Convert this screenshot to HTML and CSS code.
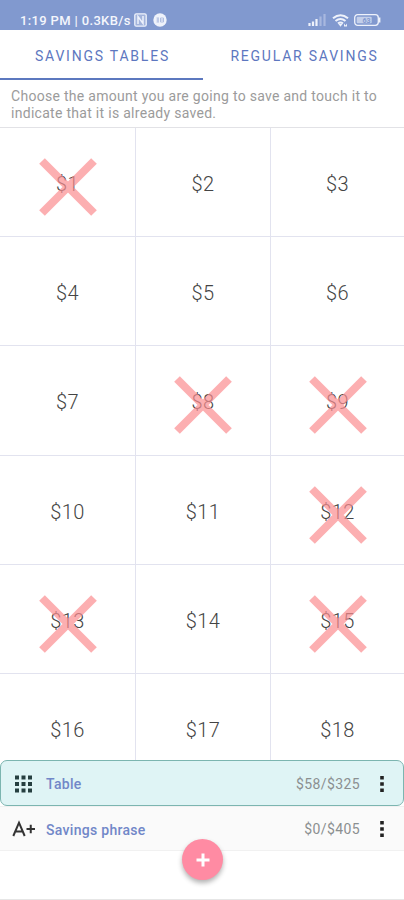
FILE: index.html
```html
<!DOCTYPE html>
<html lang="en">
<head>
  <meta charset="UTF-8">
  <meta name="viewport" content="width=device-width, initial-scale=1.0">
  <title>Savings tables</title>
  <link rel="stylesheet" href="styles.css">
</head>
<body>
  <div class="status-bar">
    <span class="status-text">1:19 PM | 0.3KB/s</span>
    <svg class="nfc-icon" width="13" height="14" viewBox="0 0 13 14">
      <rect x="0.8" y="0.8" width="11.4" height="12.4" rx="1.5" fill="#a3b4dc" stroke="#eef2fb" stroke-width="1.3"/>
      <path d="M4 11V3.5L9 10.5V3" fill="none" stroke="#eef2fb" stroke-width="1.5"/>
    </svg>
    <svg class="app-icon" width="14" height="14" viewBox="0 0 14 14">
      <circle cx="7" cy="7" r="6.7" fill="#eef2fb"/>
      <path d="M3.5 5H6M3.5 7H6M3.5 9H6M5 5V9M7.5 5H10.5V9H7.5ZM7.5 7H10.5" fill="none" stroke="#a3b4dc" stroke-width="0.8"/>
    </svg>
    <div class="status-right">
      <svg width="19" height="12" viewBox="0 0 19 12">
        <path d="M1.5 9V12M5 7.5V12M8.5 5V12" stroke="#eef2fb" stroke-width="2.2"/>
        <path d="M12.5 2.5V12M16.5 0V12" stroke="#a8b8df" stroke-width="2.2"/>
      </svg>
      <svg width="17" height="13" viewBox="0 0 17 13">
        <path d="M1 4.3Q8.5 -1.8 16 4.3M3.5 7Q8.5 3 13.5 7M6 9.5Q8.5 7.5 11 9.5" fill="none" stroke="#eef2fb" stroke-width="2.1"/>
        <path d="M6.5 10L8.5 12.7L10.5 10ZM12 12.5V9.5L13.5 11.5L15 9.5V12.5Z" fill="#eef2fb"/>
      </svg>
      <svg width="27" height="12" viewBox="0 0 27 12">
        <rect x="0.7" y="0.7" width="23.6" height="10.6" rx="3" fill="none" stroke="#eef2fb" stroke-width="1.3"/>
        <rect x="2.7" y="2.7" width="15" height="6.6" rx="1" fill="#c3cfea"/>
        <path d="M25.5 3.5V8.5" stroke="#eef2fb" stroke-width="1.8"/>
        <text x="12.5" y="8.6" text-anchor="middle" class="battery-level">63</text>
      </svg>
    </div>
  </div>

  <div class="tabs">
    <div class="tab active">SAVINGS TABLES</div>
    <div class="tab">REGULAR SAVINGS</div>
  </div>

  <p class="hint">Choose the amount you are going to save and touch it to indicate that it is already saved.</p>

  <div class="amounts" id="amounts"></div>

  <div class="saving-list">
    <div class="saving selected">
      <svg class="saving-icon" width="24" height="18" viewBox="0 0 24 18">
        <path d="M3 2.500H20M3 9H20M3 15.500H20" stroke="#263f40" stroke-width="4" stroke-dasharray="4 2.500"/>
      </svg>
      <span class="saving-name">Table</span>
      <span class="saving-total">$58/$325</span>
      <svg class="more" width="4" height="18" viewBox="0 0 4 18"><path d="M0.200 1H3.800V4.600H0.200ZM0.200 7.200H3.800V10.800H0.200ZM0.200 13.400H3.800V17H0.200Z" fill="#222"/></svg>
    </div>
    <div class="saving">
      <svg class="saving-icon" width="24" height="18" viewBox="0 0 24 18">
        <path d="M1.3 16L7 2.7L12.7 16M3.3 11.5H10.7M14.500 9H23M18.750 4.800V13.200" fill="none" stroke="#333" stroke-width="2"/>
      </svg>
      <span class="saving-name phrase">Savings phrase</span>
      <span class="saving-total">$0/$405</span>
      <svg class="more" width="4" height="18" viewBox="0 0 4 18"><path d="M0.200 1H3.800V4.600H0.200ZM0.200 7.200H3.800V10.800H0.200ZM0.200 13.400H3.800V17H0.200Z" fill="#222"/></svg>
    </div>
  </div>

  <button class="add-button" aria-label="Add">
    <svg width="14" height="14" viewBox="0 0 14 14"><path d="M7 0.500V13.500M0.500 7H13.500" stroke="#fff" stroke-width="3"/></svg>
  </button>

  <script>
    // amounts that are already saved
    const saved = [1, 8, 9, 12, 13, 15];
    const amounts = document.getElementById('amounts');

    for (let i = 1; i <= 18; i++) {
      const cell = document.createElement('div');
      cell.classList.add('amount');
      cell.innerHTML = `<span>$${i}</span>`;
      if (saved.includes(i)) {
        cell.innerHTML += `
          <svg class="cross" width="58" height="58" viewBox="0 0 58 58">
            <path d="M3 3L55 55M55 3L3 55" stroke="#fb8d90" stroke-opacity="0.7" stroke-width="8"/>
          </svg>`;
      }
      amounts.appendChild(cell);
    }
  </script>
</body>
</html>
```
FILE: styles.css
```css
* {
  box-sizing: border-box;
}
body {
  margin: 0;
  height: 900px;
  display: flex;
  flex-direction: column;
  overflow: hidden;
  position: relative;
  background: #fff;
  border-bottom: 1px solid #e6e6e6;
  font-family: Roboto, "Liberation Sans", sans-serif;
}

/* status bar */
.status-bar {
  flex: none;
  height: 30px;
  padding: 10px 23px 0 20px;
  display: flex;
  align-items: center;
  background: #8199cf;
  color: #f4f6fc;
}
.status-text {
  font-size: 13px;
  font-weight: 500;
  letter-spacing: 0.35px;
  white-space: nowrap;
}
.nfc-icon {
  margin-left: 3px;
}
.app-icon {
  margin-left: 6px;
}
.status-right {
  margin-left: auto;
  display: flex;
  align-items: center;
  gap: 5px;
}
.battery-level {
  font-size: 7px;
  font-weight: 700;
  fill: #8199cf;
}

/* tabs */
.tabs {
  flex: none;
  height: 50px;
  display: grid;
  grid-template-columns: 203px 1fr;
}
.tab {
  padding: 4px 0 0 2px;
  display: flex;
  align-items: center;
  justify-content: center;
  border-bottom: 2px solid transparent;
  font-size: 14px;
  letter-spacing: 1.78px;
  color: #5d77c0;
  white-space: nowrap;
}
.tab.active {
  border-color: #5c78bf;
}

.hint {
  flex: none;
  height: 48px;
  margin: 0;
  padding: 8px 11px 0;
  border-bottom: 1px solid #e2e2e6;
  font-size: 14px;
  line-height: 17px;
  letter-spacing: 0.29px;
  color: #9b9b9b;
}

/* table of amounts */
.amounts {
  flex: none;
  height: 632px;
  overflow: hidden;
  display: grid;
  grid-template-columns: 136px 135px 133px;
  grid-auto-rows: 109.2px;
}
.amount {
  position: relative;
  display: flex;
  align-items: center;
  justify-content: center;
  padding-top: 4px;
  border-right: 1px solid #e2e3ef;
  border-bottom: 1px solid #e2e3ef;
  font-size: 20px;
  font-weight: 300;
  letter-spacing: 0.4px;
  color: #444;
}
.amount:nth-child(3n) {
  border-right: none;
}
.cross {
  position: absolute;
  left: 50%;
  top: 30px;
  margin-left: -29px;
}

/* list of savings */
.saving-list {
  flex: none;
}
.saving {
  height: 45px;
  padding: 0 20px 0 12px;
  display: flex;
  align-items: center;
  background: #fafafa;
  border: 1px solid #f1f1f1;
  border-width: 1px 0;
}
.saving.selected {
  height: 46px;
  padding: 2px 19px 0 11px;
  background: #dff4f5;
  border: 1px solid #7cb5b0;
  border-radius: 7px;
}
.saving-name {
  margin-left: 10px;
  font-size: 14px;
  font-weight: 500;
  letter-spacing: 0.3px;
  color: #7187c8;
}
.saving-total {
  margin-left: auto;
  font-size: 14px;
  letter-spacing: 0.4px;
  color: #8b8f90;
}
.more {
  margin-left: 20px;
}
.saving-name.phrase {
  padding-top: 2px;
}

/* floating button over the list */
.add-button {
  position: absolute;
  left: 182px;
  top: 839px;
  width: 41px;
  height: 41px;
  padding: 0;
  display: flex;
  align-items: center;
  justify-content: center;
  border: none;
  border-radius: 50%;
  background: #ff8ba3;
  box-shadow: 0 3px 5px rgba(0, 0, 0, 0.3);
}
```
